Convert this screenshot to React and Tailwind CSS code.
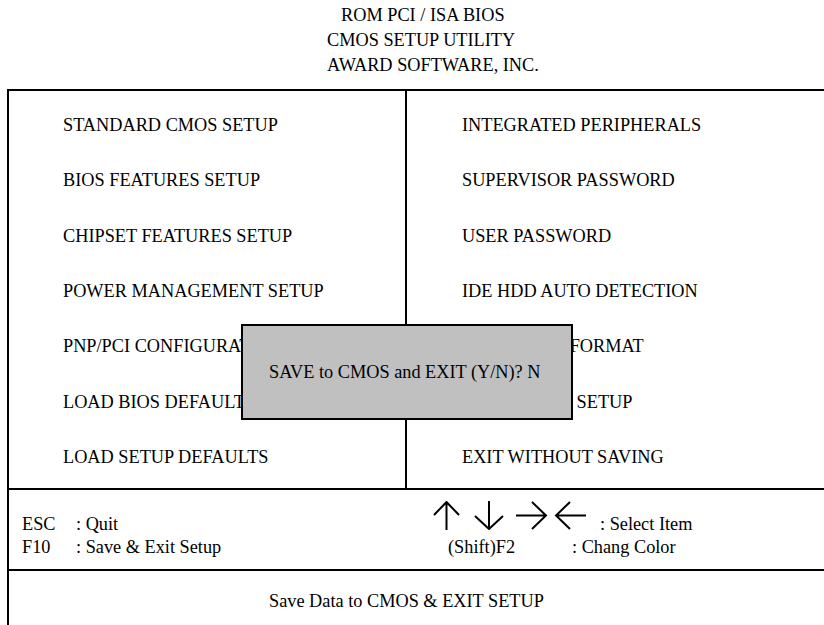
import React from 'react';

const leftItems = [
  'STANDARD CMOS SETUP',
  'BIOS FEATURES SETUP',
  'CHIPSET FEATURES SETUP',
  'POWER MANAGEMENT SETUP',
  'PNP/PCI CONFIGURATION',
  'LOAD BIOS DEFAULTS',
  'LOAD SETUP DEFAULTS',
];

const rightItems = [
  'INTEGRATED PERIPHERALS',
  'SUPERVISOR PASSWORD',
  'USER PASSWORD',
  'IDE HDD AUTO DETECTION',
  'LOW LEVEL FORMAT',
  'SAVE & EXIT SETUP',
  'EXIT WITHOUT SAVING',
];

// the four cursor keys, drawn as plain strokes
const Arrows = () => (
  <svg width="153" height="29" viewBox="0 0 153 29" fill="none" stroke="black" strokeWidth="2" className="mb-[6px] shrink-0">
    <path d="M13.5 1 V29 M1 14 L13.5 1 L26 14" />
    <path d="M56 0 V28 M42 15 L56 28 L70 15" />
    <path d="M83 14.5 H113 M99 1 L113 14.5 L99 28" />
    <path d="M123 14.5 H153 M137 1 L123 14.5 L137 28" />
  </svg>
);

const App = () => {
  return (
    <div className="relative w-[824px] h-[625px] overflow-hidden bg-white text-black font-['Liberation_Serif',serif] text-[18.3px]">
      <div className="h-[89px] pt-[3px] leading-[25px]">
        <div className="pl-[341px]">ROM PCI / ISA BIOS</div>
        <div className="pl-[327px]">CMOS SETUP UTILITY</div>
        <div className="pl-[327px]">AWARD SOFTWARE, INC.</div>
      </div>

      <div className="ml-[7px] border-l-2 border-t-2 border-black">
        {/* menu */}
        <div className="h-[399px] flex border-b-2 border-black">
          <div className="w-[398px] border-r-2 border-black pt-[7px] pl-[54px] leading-[25px]">
            {leftItems.map((item) => (
              <div key={item} className="h-[55.33px] flex items-center whitespace-nowrap">{item}</div>
            ))}
          </div>
          <div className="flex-1 pt-[7px] pl-[55px] leading-[25px]">
            {rightItems.map((item) => (
              <div key={item} className="h-[55.33px] flex items-center whitespace-nowrap">{item}</div>
            ))}
          </div>
        </div>

        {/* key help */}
        <div className="h-[81px] border-b-2 border-black pt-[11px] pl-[13px] leading-[23.5px] whitespace-nowrap">
          <div className="flex items-end">
            <span className="w-[54px]">ESC</span>
            <span className="w-[357px]">: Quit</span>
            <Arrows />
            <span className="ml-[14px]">: Select Item</span>
          </div>
          <div className="flex">
            <span className="w-[54px]">F10</span>
            <span className="w-[372px]">: Save &amp; Exit Setup</span>
            <span className="w-[124px]">(Shift)F2</span>
            <span>: Chang Color</span>
          </div>
        </div>

        <div className="h-[60px] pt-[18px] pl-[260px] leading-[25px] whitespace-nowrap">
          Save Data to CMOS &amp; EXIT SETUP
        </div>
      </div>

      {/* confirm dialog */}
      <div className="absolute left-[241px] top-[324px] w-[332px] h-[96px] border-2 border-black bg-[#c0c0c0] flex items-center pl-[26px] leading-[25px] whitespace-nowrap">
        SAVE to CMOS and EXIT (Y/N)? N
      </div>
    </div>
  );
};

export default App;
